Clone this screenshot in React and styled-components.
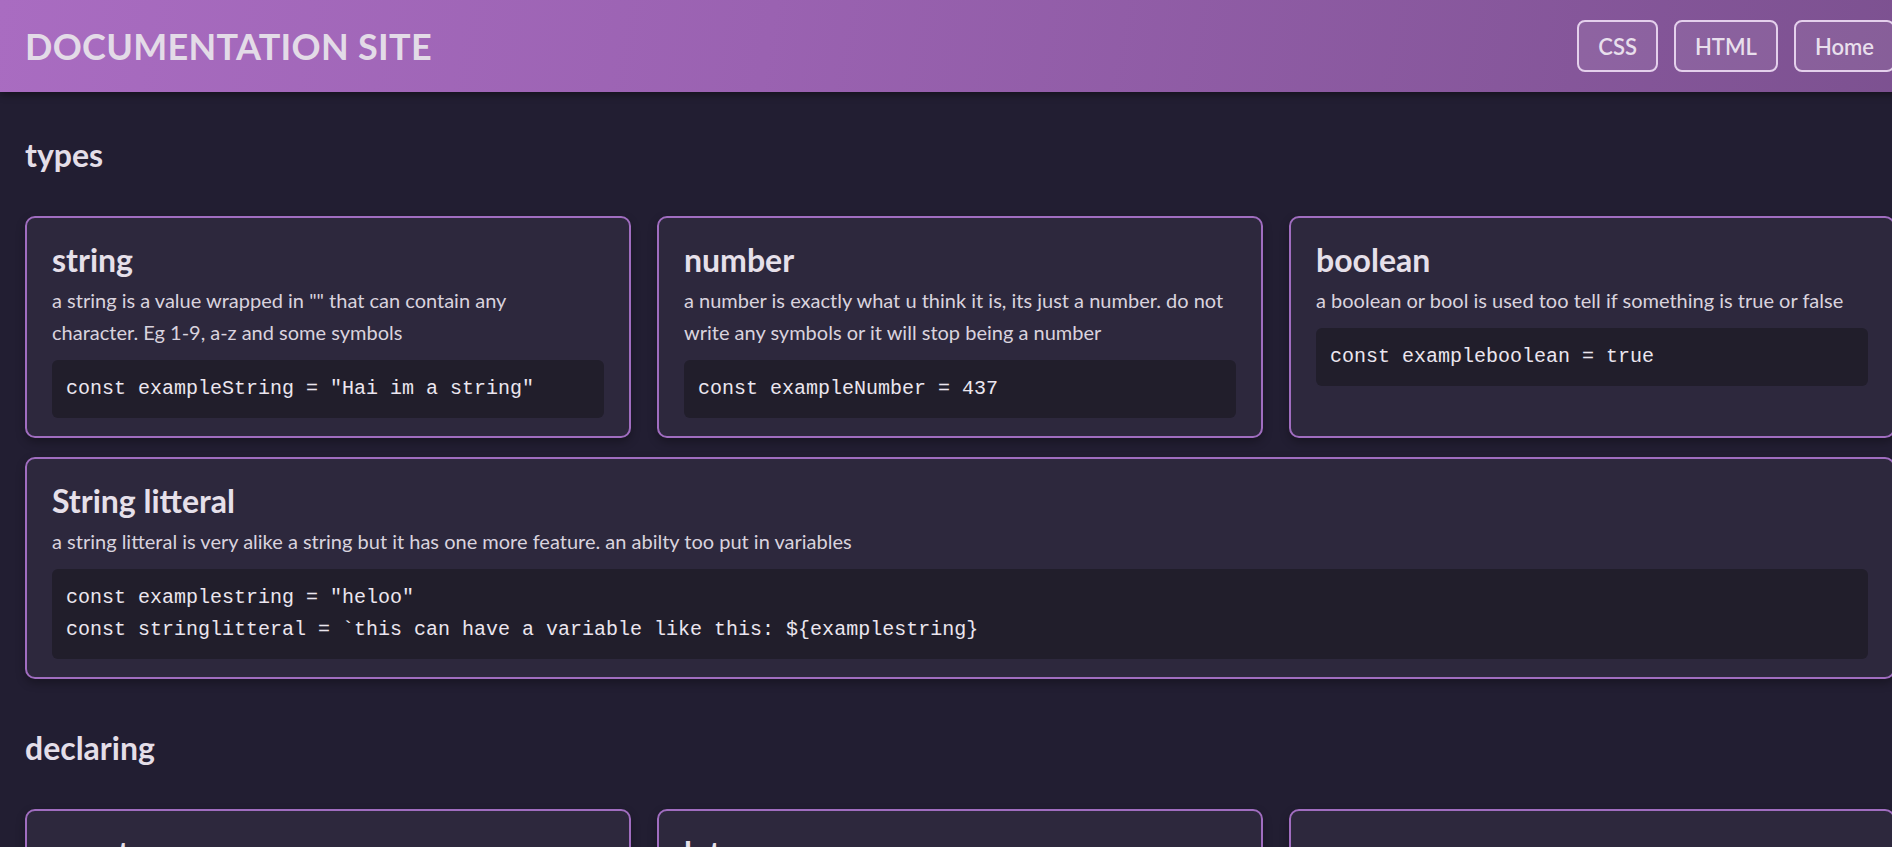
import styled, { createGlobalStyle } from "styled-components";

const GlobalStyle = createGlobalStyle`
  html, body {
    margin: 0;
    padding: 0;
    background-color: #221e32;
    overflow: hidden;
  }
  * {
    box-sizing: border-box;
  }
`;

const navLinks = ["CSS", "HTML", "Home"];

const sections = [
  {
    title: "types",
    cards: [
      {
        name: "string",
        text: 'a string is a value wrapped in "" that can contain any character. Eg 1-9, a-z and some symbols',
        code: ['const exampleString = "Hai im a string"'],
      },
      {
        name: "number",
        text: "a number is exactly what u think it is, its just a number. do not write any symbols or it will stop being a number",
        code: ["const exampleNumber = 437"],
      },
      {
        name: "boolean",
        text: "a boolean or bool is used too tell if something is true or false",
        code: ["const exampleboolean = true"],
      },
      {
        name: "String litteral",
        wide: true,
        text: "a string litteral is very alike a string but it has one more feature. an abilty too put in variables",
        code: [
          'const examplestring = "heloo"',
          "const stringlitteral = `this can have a variable like this: ${examplestring}",
        ],
      },
    ],
  },
  {
    title: "declaring",
    cards: [
      {
        name: "const",
        text: "const is used for a value that will never change after it is declared",
        code: ['const name = "value"'],
      },
      {
        name: "let",
        text: "let is used for a value that can be changed later on",
        code: ["let count = 0"],
      },
      {
        name: "var",
        text: "var is the old way of declaring, try too use let or const instead",
        code: ['var old = "value"'],
      },
    ],
  },
];

const App = () => {
  return (
    <Page>
      <GlobalStyle />
      <Header>
        <SiteTitle>DOCUMENTATION SITE</SiteTitle>
        <Nav>
          {navLinks.map((link) => (
            <NavButton key={link}>{link}</NavButton>
          ))}
        </Nav>
      </Header>
      <Main>
        {sections.map((section) => (
          <Section key={section.title}>
            <SectionTitle>{section.title}</SectionTitle>
            <CardGrid>
              {section.cards.map(({ name, text, code, wide }) => (
                <Card key={name} $wide={wide}>
                  <CardTitle>{name}</CardTitle>
                  <CardText>{text}</CardText>
                  <CodeBlock>
                    {code.map((line, i) => (
                      <CodeLine key={i}>{line}</CodeLine>
                    ))}
                  </CodeBlock>
                </Card>
              ))}
            </CardGrid>
          </Section>
        ))}
      </Main>
    </Page>
  );
};

const Page = styled.div`
  width: 1920px;
  min-height: 100vh;
  background-color: #221e32;
  font-family: "Lato", "Noto Sans", sans-serif;
  color: #e2dce6;
`;

const Header = styled.header`
  display: flex;
  align-items: center;
  justify-content: space-between;
  height: 92px;
  padding: 0 25px;
  background: linear-gradient(100deg, #a96cc1 0%, #9a62b1 40%, #7c5190 100%);
  box-shadow: 0 2px 8px rgba(0, 0, 0, 0.45);
`;

const SiteTitle = styled.h1`
  margin: 0;
  font-size: 36px;
  font-weight: 700;
  letter-spacing: 0.3px;
  color: #e3dbe7;
`;

const Nav = styled.nav`
  display: flex;
  gap: 16px;
`;

const NavButton = styled.button`
  height: 52px;
  padding: 0 19px;
  font-family: inherit;
  font-size: 22px;
  font-weight: 600;
  color: #e8dfec;
  background-color: rgba(255, 255, 255, 0.08);
  border: 2px solid #e4d0ec;
  border-radius: 8px;
  cursor: pointer;
`;

const Main = styled.main`
  padding: 0 25px;
`;

const Section = styled.section`
  padding: 21px 0 6px;
`;

const SectionTitle = styled.h2`
  margin: 24px 0 43px;
  font-size: 32px;
  line-height: 36px;
  font-weight: 700;
  color: #e4dee8;
`;

const CardGrid = styled.div`
  display: grid;
  grid-template-columns: repeat(3, 1fr);
  column-gap: 26px;
  row-gap: 19px;
`;

const Card = styled.div`
  grid-column: ${({ $wide }) => ($wide ? "1 / -1" : "auto")};
  display: flex;
  flex-direction: column;
  padding: 24px 25px 18px;
  background-color: #2d283d;
  border: 2px solid #a06dc0;
  border-radius: 10px;
  box-shadow: 0 4px 10px rgba(0, 0, 0, 0.3);
`;

const CardTitle = styled.h3`
  margin: 0 0 6px;
  font-size: 32px;
  line-height: 36px;
  font-weight: 700;
  color: #e6e0ea;
`;

const CardText = styled.p`
  margin: 0 0 12px;
  padding-right: 11px;
  font-size: 20px;
  line-height: 32px;
  color: #d9d3de;
`;

const CodeBlock = styled.pre`
  margin: 0;
  padding: 13px 14px;
  background-color: #211e2b;
  border-radius: 6px;
  font-family: "Liberation Mono", "Courier New", monospace;
  font-size: 20px;
  line-height: 32px;
  color: #ebe6ef;
  white-space: pre;
`;

const CodeLine = styled.div``;

export default App;
